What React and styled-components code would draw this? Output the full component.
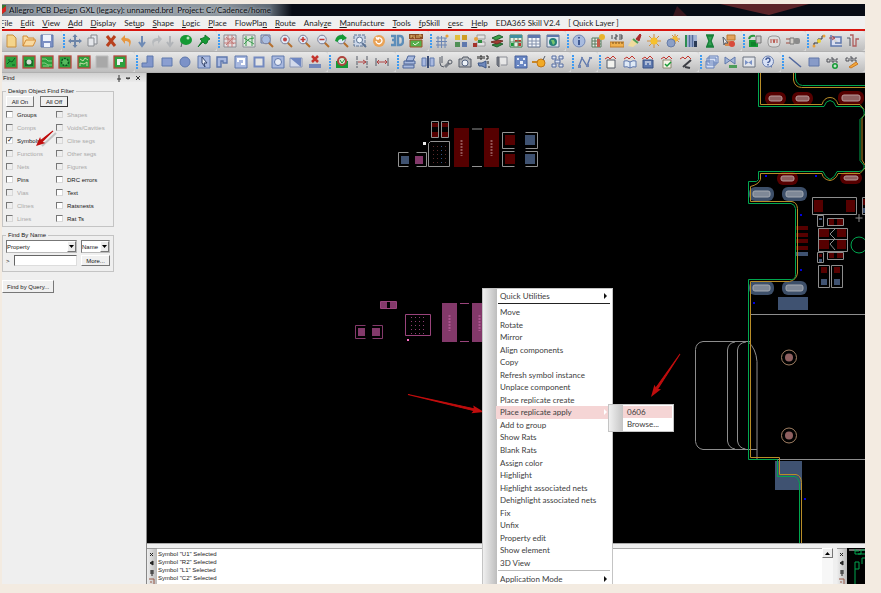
import React from "react";
import styled, { createGlobalStyle } from "styled-components";

const menus = [
  "_File", "_Edit", "_View", "_Add", "_Display", "Set_up", "_Shape", "_Logic",
  "_Place", "FlowPla_n", "_Route", "Analy_ze", "_Manufacture", "_Tools",
  "_fpSkill", "_cesc", "_Help", "EDA365 Skill V2.4", "[ Quick Layer ]",
];

const filters = [
  ["Groups", "on"], ["Shapes"],
  ["Comps"], ["Voids/Cavities"],
  ["Symbols", "checked"], ["Cline segs"],
  ["Functions"], ["Other segs"],
  ["Nets"], ["Figures"],
  ["Pins", "on"], ["DRC errors", "on"],
  ["Vias"], ["Text", "on"],
  ["Clines"], ["Ratsnests", "on"],
  ["Lines"], ["Rat Ts", "on"],
];

const commands = [
  "Move", "Rotate", "Mirror", "Align components", "Copy",
  "Refresh symbol instance", "Unplace component", "Place replicate create",
  "Place replicate apply", "Add to group", "Show Rats", "Blank Rats",
  "Assign color", "Highlight", "Highlight associated nets",
  "Dehighlight associated nets", "Fix", "Unfix", "Property edit",
  "Show element", "3D View",
];

const messages = ["U1", "R2", "L1", "C2", "R1"];

const B = "#5f78ad";
const L = "#a9b9df";
const G = "#159a35";
const R = "#c4342d";
const D = "#555b66";
const O = "#e9a13b";

const Lens = ({ color = "#dfe9f7", children }) => (
  <>
    <path d="M8 8l5 5" stroke="#b5702e" strokeWidth="2" />
    <circle cx="6" cy="5.500" r="4.300" fill={color} stroke="#7b7f99" />
    {children}
  </>
);

const Board = ({ children }) => (
  <>
    <rect x="1" y="1" width="12" height="12" fill="#2ba13c" stroke="#b8483f" strokeWidth="1.300" />
    {children}
  </>
);

const Wave = ({ children }) => (
  <>
    {children}
    <path d="M1 4l3-2 2 2 3-3 3 3" fill="none" stroke={R} />
  </>
);

const icons = {
  new: <path d="M3 1h6l3 3v9H3z" fill="#f4d48a" stroke="#c98f3c" />,
  open: <path d="M1 12V2h4l1 2h6v2M1 12l3-6h10l-3 6z" fill="#f8d9a0" stroke="#d38b35" />,
  save: <><path d="M1 1h12v12H1z" fill="#7c90c4" stroke={B} /><path d="M3 1h8v6H3zM4 9h6v4H4z" fill="#eef2fb" /></>,
  move: <path d="M7 0l2.500 3H8v3h3V4.500L14 7l-3 2.500V8H8v3h1.500L7 14l-2.500-3H6V8H3v1.500L0 7l3-2.500V6h3V3H4.500z" fill="#6d85a8" />,
  copy: <path d="M2 4h6v8H2zM5 1h6v9H8M5 1v3" fill="#e4e6ea" stroke="#85898f" />,
  remove: <path d="M3 2l8 10M11 2L3 12" stroke="#b8401d" strokeWidth="3" />,
  undo: <path d="M1 5l4-4v3c5 0 8 3 4 9 1-4 0-6-4-6v3z" fill="#e6963f" />,
  redo: <path d="M13 5L9 1v3C4 4 1 7 5 13c-1-4 0-6 4-6v3z" fill="#b7babd" />,
  down: <path d="M7 2v9M4 8l3 4 3-4" fill="none" stroke="#6f8bb5" strokeWidth="2" />,
  downOff: <path d="M7 2v9M4 8l3 4 3-4" fill="none" stroke="#b1b4b8" strokeWidth="2" />,
  ball: <><ellipse cx="7" cy="6" rx="6" ry="5" fill={G} /><circle cx="9" cy="4" r="1.500" fill="#b6e8bd" /><path d="M3 9l-1 4" stroke={D} /></>,
  pin: <path d="M8 1l5 4-2 1-1 3-2 1-2-2-5 5 4-6-2-2 3-1 2-1z" fill={G} stroke="#187a30" />,
  rats: <><path d="M1 1h12v12H1z" fill="#e5dfe1" stroke="#8a8d95" /><path d="M1 5h12M1 9h12M5 1v12M9 1v12M3 3l8 7M11 3l-8 8" stroke="#c37b78" /></>,
  ratsOff: <><path d="M1 1h12v12H1z" fill="#dfe7df" stroke="#8a8d95" /><path d="M2 4l10 6M2 10l5-5 5-1M4 2v10M10 2v10" stroke="#3f9b50" fill="none" /></>,
  zoomArea: <><path d="M1 1h9v8H1z" fill="none" stroke={B} /><Lens color="#a9bce0" /></>,
  zoomFit: <Lens><circle cx="6" cy="5.500" r="2" fill="#c34444" /></Lens>,
  zoomIn: <Lens><path d="M3.500 5.500h5M6 3v5" stroke={R} strokeWidth="1.500" /></Lens>,
  zoomOut: <Lens><path d="M3.500 5.500h5" stroke={R} strokeWidth="1.500" /></Lens>,
  zoomPrev: <><Lens /><path d="M0 7q1-6 7-6V0l5 4-5 3V5Q3 5 3 8z" fill={G} /></>,
  zoomSel: <><path d="M1 1h11v11H1z" fill="#cbd6e8" stroke="#5d7494" strokeDasharray="3 1" /><circle cx="6.500" cy="6" r="3" fill="#eef5fc" stroke="#5d7494" /><path d="M9 9l4 4" stroke="#5d7494" strokeWidth="2" /></>,
  refresh: <><circle cx="7" cy="7" r="6" fill="#e9a357" /><path d="M4 7a3 3 0 1 0 1-2.500M4 3l1 2h2" stroke="#fff" strokeWidth="1.300" fill="none" /></>,
  cube: <path d="M1 2h4v4H2h3v5H1M8 2h2q3 0 3 4.500T10 11H8z" fill="none" stroke="#5d8db9" strokeWidth="2.400" />,
  flip: <><path d="M0 0h14v5H0z" fill="#8a4b22" /><path d="M2 1v3M2 2h2M5 1v3h1M8 1v3M10 4V1h2v2" stroke="#f4d37e" fill="none" strokeWidth=".8" /><path d="M1 6h12v7H1z" fill="#54b04b" stroke="#a4532c" /><path d="M4 9l2 2 4-3" stroke="#e3f5dc" fill="none" /></>,
  grid: <><path d="M1 4h11M1 7.500h11M1 11h11M3 2v12M6.500 2v12M10 4v10" stroke="#6d86b4" /><circle cx="12" cy="2" r="1.600" fill={O} /></>,
  colors: <><path d="M1 1h5v5H1z" fill="#e0be3c" /><path d="M8 1h5v5H8z" fill="#cf9d25" /><path d="M1 8h5v5H1z" fill="#4f8f55" /><path d="M8 8h5v5H8z" fill={B} /></>,
  visible: <><path d="M5 1h8v4H5zM5 8h8v4H5z" fill="#e3e3e3" stroke="#9a9a9a" /><circle cx="4" cy="5" r="2" fill={O} /><path d="M1 9h4v4H1z" fill="#a4322a" /><path d="M6 6h4v3H6z" fill="#2f8b3e" /></>,
  layers: <><path d="M2 11l7-2 4 1-6 3z" fill="#2e8a42" stroke="#22602f" /><path d="M1 8l7-2 5 1-6 3z" fill="#a33c32" stroke="#74302a" /><path d="M2 4l7-3 4 2-7 3z" fill="#3ca14a" stroke="#22602f" /></>,
  constraint: <><path d="M1 1h12v12H1z" fill="#e7f0e7" stroke="#3d7a51" /><path d="M1 1h12v3H1z" fill="#3f8fa0" /><path d="M2 9h3v3H2z" fill={G} /><path d="M6 6h6v2H6zM9 9h3v3H9z" fill={R} /><path d="M5 4v9M9 4v9M1 8h12" stroke="#62916a" /></>,
  table: <><path d="M1 1h12v12H1z" fill="#f7f9fc" stroke="#5f6e8c" /><path d="M1 1h12v3H1z" fill={B} /><path d="M1 7h12M1 10h12M5 4v9M9 4v9" stroke="#8290ac" /></>,
  globe: <><path d="M1 1h12v12H1z" fill="#dce5ef" stroke="#5f6e8c" /><path d="M1 1h12v2H1z" fill={B} /><circle cx="7" cy="8" r="4" fill="#267e77" /><path d="M5 6l3 0 1 3-2 2z" fill="#78c66f" /></>,
  info: <><circle cx="7" cy="7" r="6" fill="#a8bbdf" stroke="#7389b7" /><path d="M7 6v5M7 3v1.500" stroke="#3f5992" strokeWidth="2" /></>,
  report: <><path d="M1 4h9v9H1z" fill="#e7ece7" stroke="#567a5c" /><path d="M1 7h9M1 10h9M4 4v9M7 4v9" stroke="#567a5c" /><path d="M6 5h3v8H6z" fill="#c15b4a" /><circle cx="11" cy="3" r="3" fill="#e8b42c" /></>,
  ruler: <><path d="M2 1v4M5 1h2v2H5v2h2M9 1h3v4H9M9 3h3" stroke="#44464c" fill="none" /><path d="M0 8h14v5H0z" fill="#f0b14e" stroke="#c07c28" /><path d="M3 8v2M6 8v2M9 8v2M12 8v2" stroke="#7b521e" /></>,
  brush: <><path d="M8 5l4-5 1 1-2 6z" fill="#a8292a" stroke="#a8292a" /><path d="M4 5l6 4-5 4-5-1z" fill="#efdb9d" /><path d="M5 5l5 4" stroke="#4f9d55" strokeWidth="2" /></>,
  sun: <><path d="M7 0v14M0 7h14M2 2l10 10M12 2L2 12" stroke="#cf8c3f" /><circle cx="7" cy="7" r="3.600" fill="#f6c12d" /></>,
  shade: <><path d="M9 0v10M4 5h10M6 1l7 7M12 1L7 6" stroke="#cf8c3f" /><circle cx="9" cy="5" r="2.800" fill="#f1ba39" /><circle cx="5" cy="9" r="4" fill="#8b9fc6" stroke="#667ca8" /></>,
  bars: <><path d="M1 1h12v12H1z" fill="#a4b4d4" /><path d="M2 1v12" stroke="#2d8c50" strokeWidth="2" /><path d="M5.500 1v12M8.500 1v12" stroke="#546b9a" strokeWidth="1.500" /><path d="M10 7h3v6h-3z" fill="#2c3b56" /></>,
  hourglass: <path d="M3 1h8M3 13h8M4 2h6L8 7l2 5H4l2-5z" fill="#32a052" stroke="#18803a" strokeWidth="1.400" />,
  dehilight: <><path d="M5 1h8v5H5z" fill="#e2a35d" stroke="#b87830" /><path d="M3 7h9v5H3z" fill="#d68b4e" /><circle cx="10" cy="10" r="3" fill="#d84a3c" /><path d="M1 3l5 6-3 0-1 2z" fill="#eee" stroke={D} /></>,
  outDb: <><path d="M1 6h9v7H1z" fill={G} /><path d="M8 2h5v7H8z" fill="#c7c7c7" stroke="#767676" /><path d="M1 5q1-4 6-3" stroke="#2c9940" strokeWidth="2" fill="none" /><path d="M3 9h5M3 11h5" stroke="#0a6d24" /></>,
  ctrl: <><rect x="1" y="2" width="12" height="11" rx="4" fill="#dcdcdc" stroke="#989898" /><path d="M4 5v4M6 5l1 4 1-4M10 5v4" stroke="#b74c43" fill="none" /></>,
  plug: <><path d="M0 5h5M0 9h5" stroke="#a34a3e" /><path d="M4 4h4v6H4z" fill="#d2cfca" stroke="#777" /><rect x="8" y="4" width="6" height="6" rx="2" fill="#8b8b8b" /></>,
  route: <><path d="M2 12V9h4V5h4V2h3" stroke="#35373e" fill="none" /><circle cx="2" cy="12" r="1.500" fill={O} /><circle cx="7" cy="7" r="2" fill="#e7d02f" /><circle cx="12" cy="2" r="1.500" fill={O} /></>,
  slide: <><path d="M2 1v11h11M4 3h8v6H6" stroke={B} fill="#d9def1" strokeWidth="1.500" /><path d="M0 4h5M3 2l3 2-3 2" stroke="#a9484e" fill="none" /></>,
  tune: <><path d="M1 4h3v8" stroke={D} fill="none" /><path d="M4 1h3v11h3V5h3" stroke="#b05c5c" fill="none" strokeWidth="1.300" /></>,
  place1: <Board><path d="M3 9l3-3 2 1 3-4M4 5h2M8 10h3" stroke="#0a5e20" fill="none" /></Board>,
  place2: <Board><path d="M3 5h8v6H3z" fill="#176b2a" /><circle cx="7" cy="7" r="2.500" fill="#d4ddd0" /></Board>,
  place3: <Board><path d="M2 4h4l2 2h4M2 8h3l3 2h4M3 11h6" stroke="#8cce85" fill="none" /></Board>,
  place4: <Board><circle cx="7" cy="7" r="3.500" fill="#55b95c" stroke="#0b5220" strokeWidth="1.500" strokeDasharray="2 1" /></Board>,
  place5: <Board><path d="M3 4l3 2 2-3 3 2M3 11V8l4 1 3-2v4" stroke="#c6dba4" fill="none" /></Board>,
  blank: <path d="M1 1h12v12H1z" fill="#a8a8a8" stroke="#bcbcbc" />,
  place6: <Board><path d="M4 4h6v3H7v3H4z" fill="#eef0ee" /></Board>,
  poly: <path d="M6 1h6v11H1V8h5z" fill="#8196cb" stroke={B} />,
  rect: <path d="M2 3h10v8H2z" fill="#8b9fd1" stroke={B} />,
  circle: <circle cx="7" cy="7" r="5" fill="#7c92c8" stroke={B} />,
  select: <><path d="M1 1h12v12H1z" fill={L} stroke={B} /><path d="M5 2l5 6H7l1 4-3-4z" fill="#eef1fa" stroke="#33446d" /></>,
  void: <path d="M2 2h10v6H8V6H6v6H2z" fill={L} stroke={B} strokeWidth="1.400" />,
  voidPoly: <><path d="M1 1h12v12H1z" fill={L} stroke={B} /><path d="M4 7V4h6v5H7" stroke="#fff" fill="none" strokeWidth="2" /></>,
  voidRect: <path d="M2.500 2.500h9v9h-9z" fill="#e4e4e4" stroke="#7389c0" strokeWidth="2" />,
  voidCircle: <><path d="M1 1h12v12H1z" fill={L} stroke={B} /><circle cx="7" cy="7" r="3.500" fill="#e8ecf5" stroke={B} /></>,
  edge: <><path d="M1 3h12v9H1z" fill="#d3daeb" stroke="#8a96b5" /><path d="M1 3h11v9z" fill="#6f87c2" /></>,
  delIsland: <><path d="M1 9h12v4H1z" fill="#7388bb" /><path d="M4 1l6 6M10 1L4 7" stroke={R} strokeWidth="2.500" /></>,
  netShow: <><path d="M1 6h12v7H1z" fill={G} /><circle cx="7" cy="6" r="4" fill="#d5ead3" stroke="#b0443e" strokeWidth="2" /><path d="M5 5l2 3 3-4" fill="none" stroke={G} /></>,
  dim1: <><path d="M2 1v12M12 1v12" stroke={D} strokeDasharray="4 1" /><path d="M3 7h8M8 5l3 2-3 2" stroke="#b04646" fill="none" /></>,
  dim2: <><path d="M1 3v8M13 3v8" stroke={D} /><path d="M2 7h10M4 5L2 7l2 2M10 5l2 2-2 2" stroke="#b04242" fill="none" /></>,
  stack: <><path d="M6 1h7l-2 5H4zM2 6h11v3H2zM1 10h11v3H1z" fill="#a9bade" stroke="#4f679a" /></>,
  mirror: <><path d="M1 3h4v8H1zM9 3h4v8H9z" fill={L} stroke={B} /><path d="M7 1v12" stroke="#3c4e76" strokeWidth="2" /></>,
  wrench: <><path d="M1 2v6q0 4 4 4M3 1v7" fill="none" stroke={D} /><path d="M6 12l4-4" stroke="#7b7f87" strokeWidth="3" /><circle cx="11" cy="7" r="2" fill="none" stroke={D} /></>,
  camera: <><path d="M1 4h3l1-2h5l1 2h2v8H1z" fill="#b3b6bb" stroke={D} /><circle cx="7" cy="8" r="3" fill="#edf2f8" stroke="#586783" /></>,
  binary: <><path d="M1 1v3M3 1h2v3H3zM7 1v3M9 1h2v3H9M11 6v3M12 11v2" stroke="#222" fill="none" /><path d="M1 8h4l4-2v7l-4-2H2z" fill="#6f89bd" stroke="#3d5686" /></>,
  book: <><path d="M4 2h8v8H6" fill="#e7e7e7" stroke="#8a8d95" /><path d="M2 2v8l2 2V2z" fill="#777c86" stroke="#626772" /></>,
  pattern: <><path d="M1 1h12v12H1z" fill="#6a87c3" stroke="#47639e" /><path d="M3 3h2v2H3zM9 3h2v2H9zM6 6h3v3H6zM3 10h2v1H3zM10 9h2v2h-2z" fill="#e3ebf8" /></>,
  bomb: <><path d="M0 7h6" stroke="#c98726" strokeWidth="2" /><circle cx="9" cy="8" r="4" fill="#f2aa25" stroke="#bf761a" /><path d="M11 5l2-4" stroke={D} /></>,
  matrix: <path d="M1 1h4v3H1zM8 1h4v3H8zM1 9h4v3H1zM8 9h4v3H8zM4 5h5v3H4z" fill="#dfe6f3" stroke="#526b9f" />,
  spline: <><path d="M1 11L4 3l5 8 3-8" stroke={B} fill="none" strokeWidth="1.400" /><path d="M0 10h3v3H0zM3 2h2v2H3zM8 9h3v3H8zM11 2h3v2h-3z" fill="#7186b3" /></>,
  sig1: <Wave><path d="M3 5h8v8H3z" fill="#f2f2ee" stroke={D} /></Wave>,
  sig2: <Wave><path d="M1 6q3-1 6 1 3-2 6-1v6q-3-1-6 1-3-2-6-1zM7 7v6" fill="#dfe9f5" stroke={B} /></Wave>,
  sig3: <Wave><path d="M2 5h10v8H2z" fill="#5d78ae" stroke="#3a5285" /><path d="M4 7h6M4 9h2M8 9h2" stroke="#fff" /></Wave>,
  sig4: <Wave><path d="M3 5h8v8H3z" fill="#f6f4e8" stroke="#8c8a72" /><path d="M5 9l2 2 4-4" stroke={G} fill="none" strokeWidth="1.500" /></Wave>,
  sig5: <Wave><path d="M4 12l8-7M6 12l5 1" stroke="#3c3e44" strokeWidth="2" /></Wave>,
  sheets: <path d="M4 1h9v7H4zM2 3h9v7H2zM1 6h8v7H1z" fill="#d6e0f5" stroke="#6480b8" />,
  bow1: <><path d="M1 2l10 7V2L1 9z" fill="#a5b7d8" stroke={B} /><path d="M5 10h8v3H5z" fill="#4c9d59" /></>,
  bow2: <><path d="M1 2h12v10H1z" fill="#e2e5eb" stroke="#6b7280" /><path d="M3 5l7 5V5l-7 5z" fill="#7a92c6" /></>,
  help: <><circle cx="7" cy="6.500" r="5.500" fill="#d8e1f5" stroke="#6b80b0" /><path d="M9 11l2 2v-3" fill="#6b80b0" /><path d="M5 5q0-2 2-2t2 2-2 2.500V8M7 9v1.500" stroke="#3e5794" fill="none" strokeWidth="1.400" /></>,
  line: <path d="M1 2l12 10" stroke="#52689e" strokeWidth="1.600" />,
  addRect: <path d="M2 3h10v8H2z" fill="#889bc8" stroke="#6176a8" />,
  addText: <><path d="M3 4H1v3h3V4M6 2v5h2V4H6M12 4h-2v3h2" stroke="#4f5158" fill="none" /><circle cx="9" cy="11" r="3" fill={G} /><path d="M7.500 11h3M9 9.500v3" stroke="#fff" /></>,
  editText: <><path d="M3 3H1v3h3V3M6 1v5h2V3H6M12 3h-2v3h2" stroke="#4f5158" fill="none" /><path d="M4 12l7-5 2 2-7 4z" fill="#f3a83b" stroke="#cb7923" /></>,
};

const topBar = [
  { w: 60, plain: true, items: ["new", "open", "save"] },
  { w: 155, items: ["move", "copy", "remove", "undo", "down", "redo", "downOff", "ball", "pin"] },
  { w: 212, items: ["rats", "ratsOff", "zoomArea", "zoomFit", "zoomIn", "zoomOut", "zoomPrev", "zoomSel", "refresh", "cube", "flip"] },
  { w: 137, items: ["grid", "colors", "visible", "layers", "constraint", "table", "globe"] },
  { w: 176, items: ["info", "report", "ruler", "brush", "sun", "shade", "bars", "hourglass", "dehilight"] },
  { w: 64, items: ["outDb", "ctrl", "plug"] },
  { w: 59, items: ["route", "slide", "tune"] },
];

const lowerBar = [
  { w: 133, plain: true, items: ["place1", "place2", "place3", "place4", "place5", "blank", "place6"] },
  { w: 193, items: ["poly", "rect", "circle", "select", "void", "voidPoly", "voidRect", "voidCircle", "edge", "delIsland"] },
  { w: 68, items: ["netShow", "dim1", "dim2"] },
  { w: 175, items: ["stack", "mirror", "wrench", "camera", "binary", "book", "pattern", "bomb", "matrix"] },
  { w: 27, items: ["spline"] },
  { w: 101, items: ["sig1", "sig2", "sig3", "sig4", "sig5"] },
  { w: 82, items: ["sheets", "bow1", "bow2", "help"] },
  { w: 84, items: ["line", "addRect", "addText", "editText"] },
];

const narrow = ["undo", "down", "redo", "downOff"];

const MenuLabel = ({ text }) => {
  const at = text.indexOf("_");
  if (at < 0) return text;
  return (
    <>
      {text.slice(0, at)}
      <u>{text[at + 1]}</u>
      {text.slice(at + 2)}
    </>
  );
};

const ToolRow = ({ groups }) => (
  <Toolbar $columns={groups.map((g) => `${g.w}fr`).join(" ")}>
    {groups.map((group) => (
      <ToolGroup key={group.items[0]} $plain={group.plain}>
        {!group.plain && <Grip />}
        {group.items.map((name) => (
          <ToolButton key={name} aria-label={name} $weight={narrow.includes(name) ? 14 : 18}>
            <svg width="14" height="14" viewBox="0 0 14 14">{icons[name]}</svg>
          </ToolButton>
        ))}
      </ToolGroup>
    ))}
  </Toolbar>
);

const Arrow = ({ x1, y1, x2, y2, size = 12 }) => {
  const angle = (Math.atan2(y2 - y1, x2 - x1) * 180) / Math.PI;
  const length = Math.hypot(x2 - x1, y2 - y1);
  return (
    <g transform={`translate(${x2} ${y2}) rotate(${angle})`} fill="#c00d0d">
      <path d={`M${-length} 0L${-size + 2} -1V1z`} stroke="#c00d0d" />
      <path d={`M0 0L${-size} -4L${-size + 2} 0L${-size} 4z`} />
    </g>
  );
};

const Pad = ({ x, y, w, h, blue }) => (
  <g>
    <rect x={x} y={y} width={w} height={h} rx="6" fill={blue ? "#3d4f69" : "#560000"} />
    <rect x={x + 4} y={y + 4} width={w - 8} height={h - 8} rx="2" fill={blue ? "#7e8897" : "#8f6060"} stroke={blue ? "#a5aab2" : "#b99a9a"} />
  </g>
);

const Brackets = ({ x, y, w, h, gap, color }) => (
  <path
    d={`M${x + gap} ${y}H${x}V${y + h}H${x + gap}M${x + w - gap} ${y}H${x + w}V${y + h}H${x + w - gap}`}
    fill="none"
    stroke={color}
  />
);

const dots = [0, 1, 2, 3, 4].flatMap((r) => [0, 1, 2, 3].map((c) => [c * 4, r * 4]));

const BoardDrawing = () => (
  <BoardSvg viewBox="147 73 718 470" preserveAspectRatio="xMinYMin slice">
    {/* placed module */}
    <g fill="#560000">
      <path d="M432 123h6v4h-6zM432 132h6v5h-6zM442 123h6v4h-6zM442 132h6v5h-6zM454 128h15v39h-15zM484 128h15v39h-15zM505 135h10v10h-10zM505 154h10v10h-10z" />
    </g>
    <path d="M401 156h8v8h-8zM525 135h10v10h-10zM525 154h10v10h-10z" fill="#3f5271" />
    <path d="M415 156h8v8h-8z" fill="#83396a" />
    <path d="M431.500 121.500h7v16h-7zM441.500 121.500h7v16h-7zM430.500 141.500h19v25h-21v-23zM472 129h10M472 166.500h10" fill="none" stroke="#929292" />
    <Brackets x={398.500} y={152.500} w={28} h={14} gap={10} color="#929292" />
    <Brackets x={502.500} y={132.500} w={35} h={16} gap={12} color="#929292" />
    <Brackets x={502.500} y={151.500} w={35} h={15} gap={12} color="#929292" />
    <path d="M423 142h3v3h-3z" fill="#eee" />
    {dots.map(([x, y]) => (
      <rect key={`a${x}-${y}`} x={433 + x} y={146 + y} width="1" height="1" fill={x === 8 ? "#36558a" : "#5c2b2b"} />
    ))}
    <path d="M461.500 140v16M491.500 140v16" stroke="#ad7b7b" strokeDasharray="2 1" strokeWidth="2" opacity=".7" />
    {/* module waiting for the replicate */}
    <path d="M381 301.500h6v7h-6zM390 301.500h6v7h-6zM358 328h7v8h-7zM372 328h8v8h-8zM442 303h15v39h-15zM472 303h15v39h-15z" fill="#83396a" />
    <path d="M380.500 301.500h16v7h-16zM405.500 314.500h25v21h-25zM460 303.500h9M460 341.500h9" fill="none" stroke="#9a447c" />
    <Brackets x={355.500} y={325.500} w={27} h={13} gap={10} color="#83396a" />
    <path d="M407 339h2v2h-2z" fill="#ff70c8" />
    {dots.map(([x, y]) => (
      <rect key={`b${x}-${y}`} x={411 + x} y={317 + y} width="1" height="1" fill="#8d3e72" />
    ))}
    <path d="M449.500 315v16M479.500 315v16" stroke="#c263a2" strokeDasharray="2 1" strokeWidth="2" opacity=".7" />
    {/* pads */}
    <Pad x={765} y={92} w={21} h={13} />
    <Pad x={792} y={92} w={21} h={13} />
    <Pad x={838} y={91} w={26} h={14} />
    <Pad x={777} y={172} w={21} h={13} />
    <Pad x={840} y={172} w={22} h={12} />
    <Pad x={749} y={187} w={25} h={14} blue />
    <Pad x={782} y={187} w={25} h={14} blue />
    <Pad x={749} y={281} w={25} h={14} blue />
    <Pad x={782} y={281} w={25} h={14} blue />
    <path d="M778 297h30v13h-30zM796 252h12v4h-12zM775 461h27v29h-27zM821 279h6v6h-6zM834 279h6v6h-6zM819 218h3v2h-3zM819 259h3v3h-3zM863 208h2v5h-2z" fill="#3f5271" />
    <path d="M796 226h12v4h-12zM796 233h12v4h-12zM796 239h12v4h-12zM796 246h12v4h-12zM814 200h9v12h-9zM846 200h9v12h-9zM863 199h2v6h-2zM829 219h5v6h-5zM837 219h6v6h-6zM819 229h10v8h-10zM837 229h9v8h-9zM819 240h10v9h-10zM837 240h9v9h-9zM829 253h5v5h-5zM837 253h6v5h-6zM821 267h6v6h-6zM834 267h6v6h-6zM819 254h3v3h-3z" fill="#560000" />
    {/* part outlines */}
    <path d="M812.500 197.500h44v17h-44zM865 197.500h-2.500v17H865M817.500 215.500h6v11h-6zM827.500 218.500h16v7h-16zM818.500 228.500h29v23h-29zM818.500 239.500h29M817.500 252.500h6v10h-6zM827.500 252.500h16v7h-16zM818.500 265.500h11v22h-11zM831.500 265.500h11v22h-11zM835 229l-5 5 5 5-5 5 5 6M859 214v8M855.500 218h7M751 314.500h114M757 459.500h108" fill="none" stroke="#8d8d8d" />
    <path d="M750 341.500h-47q-7 1-7.500 8v92q1 7 7.500 8h54M735 342q-7 1-7.500 8v91q1 7 7.500 8M746 342q-8 1-8.500 8v91q1 7 8 8M748 341.500q8 7 9 20v98" fill="none" stroke="#8d8d8d" />
    {/* board edge and keepin */}
    <g fill="none" stroke="#b98d28">
      <path d="M760.500 73v31.500H822q2-7 8-7t8 7h22l4 5M793.500 73v7q1 7 8 7.500H865M865 114l-3 4v42l3 5M865 168l-5 5.500h-22q-2 6-8 7-7-1-8-7h-61.500v6q-2 5-10 7V201.500H792q5 1 5.500 7V273q-1 7-8 8.500h-39v176h29v17H796q5 1 5.500 8V543" />
    </g>
    <g fill="none" stroke="#00a64f">
      <path d="M758.500 73v33.500H824q2-6 6-6t6 6h24q5 2 4 9l-4 4v41l4 5q1 5-5 6h-22q-2 6-7 8-5-2-7-8h-64.500v8l-2 2h-8v22H791q4 1 4.500 5v66q0 5-4 5h-43v180h29v17h17q4 1 5 7V543M795.500 73v5q1 7 7 7.500H865" />
      <circle cx="859" cy="245" r="8" />
    </g>
    <g fill="none" stroke="#a28064">
      <circle cx="789" cy="357.500" r="7.500" />
      <circle cx="789" cy="435.500" r="7.500" />
    </g>
    <circle cx="789" cy="357.500" r="4" fill="#8f6060" />
    <circle cx="789" cy="435.500" r="4" fill="#8f6060" />
    <path d="M765 175h2v2h-2zM815 175h2v2h-2zM800 214h2v2h-2zM800 269h2v2h-2zM753 302h2v2h-2zM804 498h2v2h-2z" fill="#0000dc" />
    <Arrow x1={408} y1={394.500} x2={484} y2={412} />
    <Arrow x1={680} y1={354} x2={651} y2={397} />
  </BoardSvg>
);

const StripIcons = () => (
  <Strip>
    <svg width="9" height="36" viewBox="0 0 9 36">
      <path d="M3 4l3 3M6 4L3 7M6 12l-3 2 3 2zM3 22h4M3 24h4M5 21v6" stroke="#222" fill="#222" />
      <path d="M2 30h5v6M3 33h2" stroke="#9b5a49" fill="none" />
    </svg>
  </Strip>
);

const Picker = ({ label, value }) => (
  <PickerBox>
    <PickerSelect aria-label={label} defaultValue={value}>
      <option>{value}</option>
    </PickerSelect>
    <PickerArrow>
      <svg width="5" height="3" viewBox="0 0 5 3"><path d="M0 0h5L2.500 3z" /></svg>
    </PickerArrow>
  </PickerBox>
);

const FindPanel = () => (
  <Panel>
    <PanelHeader>
      <span>Find</span>
      <svg width="26" height="8" viewBox="0 0 26 8">
        <path d="M3 1v4M1 5h4M3 5v3M10 4h4l-2 1zM20 2l4 4M24 2l-4 4" stroke="#333" fill="none" />
      </svg>
    </PanelHeader>
    <Group>
      <legend>Design Object Find Filter</legend>
      <ButtonLine>
        <PushButton>All On</PushButton>
        <PushButton $strong>All Off</PushButton>
      </ButtonLine>
      <Filters>
        {filters.map(([name, state]) => (
          <Filter key={name} $off={!state}>
            <Check type="checkbox" disabled={!state} defaultChecked={state === "checked"} />
            {name}
          </Filter>
        ))}
      </Filters>
      <PanelArrow width="28" height="26" viewBox="30 116 28 26">
        <path d="M56 123L42 136" stroke="#999" strokeWidth="2" opacity=".5" />
        <Arrow x1={53} y1={121} x2={36} y2={136} size={9} />
      </PanelArrow>
    </Group>
    <Group>
      <legend>Find By Name</legend>
      <NameGrid>
        <Picker label="Find by" value="Property" />
        <Picker label="Match" value="Name" />
        <Prompt>
          &gt;
          <TextBox />
        </Prompt>
        <PushButton>More...</PushButton>
      </NameGrid>
    </Group>
    <QueryButton>Find by Query...</QueryButton>
  </Panel>
);

const ContextMenu = () => (
  <Menu>
    <MenuItem>
      <button>Quick Utilities</button>
      <MenuMark />
    </MenuItem>
    <Rule $dark />
    <Commands>
      {commands.map((name) => {
        const active = name === "Place replicate apply";
        return (
          <MenuItem key={name} $active={active}>
            <button>{name}</button>
            {active && (
              <>
                <MenuMark $light />
                <SubMenu>
                  <MenuItem $active><button>0606</button></MenuItem>
                  <MenuItem><button>Browse...</button></MenuItem>
                </SubMenu>
              </>
            )}
          </MenuItem>
        );
      })}
    </Commands>
    <Rule />
    <MenuItem>
      <button>Application Mode</button>
      <MenuMark />
    </MenuItem>
  </Menu>
);

const App = () => (
  <Page>
    <GlobalStyle />
    <AppWindow>
      <TitleBar>
        <svg width="5" height="11" viewBox="0 0 5 11">
          <path d="M0 1h4v6l-4 3z" fill="#34782f" />
          <path d="M0 5l4-3v5l-4 3z" fill="#d8231e" />
        </svg>
        <Caption>Allegro PCB Design GXL (legacy): unnamed.brd&nbsp; Project: C:/Cadence/home</Caption>
        <svg width="200" height="12" viewBox="0 0 200 12">
          <path d="M55 0h89l-40 11z" fill="#5c2429" />
          <path d="M12 2l10 10H8z" fill="#38161d" />
        </svg>
      </TitleBar>
      <MenuBar>
        {menus.map((text) => (
          <button key={text}><MenuLabel text={text} /></button>
        ))}
      </MenuBar>
      <ToolRow groups={topBar} />
      <ToolRow groups={lowerBar} />
      <Workspace>
        <FindPanel />
        <Main>
          <BoardArea>
            <BoardDrawing />
          </BoardArea>
          <Console>
            <StripIcons />
            <Log>
              {messages.map((ref) => (
                <li key={ref}>Symbol "{ref}" Selected</li>
              ))}
            </Log>
            <Scroll>
              <button aria-label="Scroll up">
                <svg width="5" height="3" viewBox="0 0 5 3"><path d="M0 3h5L2.500 0z" /></svg>
              </button>
            </Scroll>
            <StripIcons />
            <Overview>
              <svg width="16" height="36" viewBox="0 0 16 36">
                <path d="M0 2h16" stroke="#ddd" />
                <path d="M6 36V14h4v7h-4M6 1v5h6v-4h4M9 6h7M16 10h-3v6M6 3h4" stroke="#00a64f" fill="none" />
              </svg>
            </Overview>
          </Console>
          <ContextMenu />
        </Main>
      </Workspace>
    </AppWindow>
  </Page>
);

const GlobalStyle = createGlobalStyle`
  * {
    box-sizing: border-box;
  }

  body {
    margin: 0;
    background: #f3ebe1;
  }

  button, input, select {
    font: inherit;
    color: inherit;
    margin: 0;
    padding: 0;
  }

  ul {
    list-style: none;
    margin: 0;
    padding: 0;
  }

  svg {
    display: block;
    flex: none;
  }
`;

const Page = styled.div`
  height: 100vh;
  padding: 4px 16px 9px 2px;
`;

const AppWindow = styled.div`
  height: 100%;
  display: flex;
  flex-direction: column;
  overflow: hidden;
  background: #efefef;
  font: 8px/12px Lato, "Open Sans", sans-serif;
`;

const TitleBar = styled.header`
  display: flex;
  flex: none;
  height: 12px;
  background: linear-gradient(90deg, #77818b, #9aa2aa 80px, #8d969e 220px, #5f6a75 268px, #070b14 290px);
`;

const Caption = styled.h1`
  flex: 1;
  margin: 0 0 0 2px;
  font-size: 8px;
  line-height: 12px;
  font-weight: 400;
  color: #080a0d;
  white-space: nowrap;
  text-shadow: 0 0 3px #dfe4e8;
`;

const MenuBar = styled.nav`
  display: flex;
  flex: none;
  gap: 8px;
  height: 15px;
  margin-left: -2px;
  background: #f0f0f0;
  border-bottom: 2px solid #d8150f;
  overflow: hidden;

  button {
    border: 0;
    background: none;
    color: #222;
    white-space: nowrap;
  }
`;

const Toolbar = styled.div`
  display: grid;
  flex: none;
  grid-template-columns: ${(props) => props.$columns};
  height: 21px;
  background: #d9d9d9;
  border-bottom: 1px solid #b0b0b0;
`;

const ToolGroup = styled.div`
  display: flex;
  align-items: center;
  min-width: 0;
  padding-right: ${(props) => (props.$plain ? 6 : 4)}px;
  background: linear-gradient(#e9e9e9, #bdbdbd);
  border-radius: 0 4px 4px 0;
`;

const Grip = styled.i`
  flex: none;
  width: 2px;
  height: 14px;
  margin: 0 1px;
  background: repeating-linear-gradient(#3d9bf3 0 2px, transparent 2px 3px);
`;

const ToolButton = styled.button`
  display: flex;
  flex: ${(props) => props.$weight} 1 0;
  min-width: 0;
  justify-content: center;
  border: 0;
  background: none;
`;

const Workspace = styled.div`
  display: flex;
  flex: 1;
  min-height: 0;
`;

const Panel = styled.aside`
  flex: none;
  width: 144px;
  font: 6px/10px "Liberation Sans", Arial, sans-serif;
  color: #151515;
  background: #efefef;
`;

const PanelHeader = styled.div`
  display: flex;
  align-items: center;
  justify-content: space-between;
  height: 9px;
  margin-bottom: 4px;
  padding: 0 4px 0 1px;
  background: linear-gradient(#d0d0d0, #ececec);
`;

const Group = styled.fieldset`
  position: relative;
  width: 112px;
  margin: 0 0 3px;
  padding: 0 3px 1px;
  border: 1px solid #c4c4c4;

  legend {
    padding: 0 2px;
  }
`;

const ButtonLine = styled.div`
  display: flex;
  gap: 6px;
  margin-bottom: 1px;
`;

const PushButton = styled.button`
  height: 11px;
  min-width: 28px;
  padding: 0 4px;
  line-height: 8px;
  white-space: nowrap;
  background: #f0f0f0;
  border: 1px solid;
  border-color: ${(props) => (props.$strong ? "#777 #333 #333 #777" : "#fff #777 #777 #fff")};
`;

const Filters = styled.div`
  display: grid;
  grid-template-columns: 50px 1fr;
  grid-auto-rows: 13px;
`;

const Filter = styled.label`
  display: flex;
  align-items: center;
  gap: 4px;
  white-space: nowrap;
  color: ${(props) => (props.$off ? "#a9a9a9" : "#151515")};
`;

const Check = styled.input`
  appearance: none;
  width: 7px;
  height: 7px;
  background: ${(props) => (props.disabled ? "#eee" : "#fff")};
  border: 1px solid;
  border-color: #777 #d8d8d8 #d8d8d8 #777;

  &:checked::after {
    content: "✓";
    display: block;
    font: bold 7px/5px "DejaVu Sans", sans-serif;
  }
`;

const PanelArrow = styled.svg`
  position: absolute;
  left: 27px;
  top: 30px;
  pointer-events: none;
`;

const NameGrid = styled.div`
  display: grid;
  grid-template-columns: 1fr 29px;
  gap: 2px 4px;
  padding-bottom: 4px;
`;

const PickerBox = styled.div`
  display: flex;
  height: 13px;
  background: #fff;
  border: 1px solid;
  border-color: #777 #bbb #bbb #777;
`;

const PickerSelect = styled.select`
  appearance: none;
  flex: 1;
  min-width: 0;
  border: 0;
  background: none;
`;

const PickerArrow = styled.span`
  display: flex;
  align-items: center;
  justify-content: center;
  width: 9px;
  background: #ececec;
  border: 1px solid;
  border-color: #fff #777 #777 #fff;
`;

const Prompt = styled.label`
  display: flex;
  align-items: center;
  justify-content: space-between;
`;

const TextBox = styled.input`
  width: 63px;
  height: 11px;
  background: #fff;
  border: 1px solid;
  border-color: #666 #ddd #ddd #666;
`;

const QueryButton = styled(PushButton)`
  height: 13px;
  margin-top: 5px;
`;

const Main = styled.main`
  position: relative;
  display: flex;
  flex: 1;
  flex-direction: column;
  min-width: 0;
  border-left: 1px solid #888;
`;

const BoardArea = styled.div`
  flex: 1;
  min-height: 0;
  overflow: hidden;
  background: #000;
`;

const BoardSvg = styled.svg`
  width: 100%;
  height: 100%;
`;

const Console = styled.section`
  display: flex;
  flex: none;
  height: 41px;
  padding-top: 4px;
  border-top: 1px solid #aaa;
  font: 6px/8px "Liberation Sans", Arial, sans-serif;
`;

const Strip = styled.div`
  flex: none;
  width: 10px;
  overflow: hidden;
  background: linear-gradient(90deg, #eee, #bbb);
  border-top: 1px solid #999;
`;

const Log = styled.ul`
  flex: 1;
  overflow: hidden;
  padding: 1px;
  background: #fff;
  border-top: 1px solid #aaa;
  color: #222;
`;

const Scroll = styled.div`
  width: 11px;
  margin-right: 4px;
  background: #f7f7f7;

  button {
    display: flex;
    align-items: center;
    justify-content: center;
    width: 11px;
    height: 10px;
    background: #eee;
    border: 1px solid;
    border-color: #fff #777 #777 #fff;
  }
`;

const Overview = styled.div`
  width: 18px;
  overflow: hidden;
  padding-left: 2px;
  background: #000;
`;

const MenuItem = styled.li`
  position: relative;
  display: flex;
  align-items: center;
  min-height: 0;
  margin-left: 13px;
  background: ${(props) => (props.$active ? "#f5d5d5" : "none")};

  > button {
    padding: 0 4px;
    border: 0;
    background: none;
    color: #3d3d3d;
    line-height: 12px;
    white-space: nowrap;
  }
`;

const Menu = styled.ul`
  position: absolute;
  left: 335px;
  top: 215px;
  width: 131px;
  padding: 1px 0;
  border: 1px solid #c4c4c4;
  background: linear-gradient(90deg, #f0f0f0, #bdbdbd 14px, #fff 14px);
`;

const Commands = styled.ul`
  display: grid;
  grid-auto-rows: 1fr;
  height: 263px;
`;

const Rule = styled.li`
  height: 1px;
  margin: 1px 2px 2px 15px;
  background: ${(props) => (props.$dark ? "#222" : "#bbb")};
`;

const MenuMark = styled.i`
  margin: 0 5px 0 auto;
  border: 3px solid transparent;
  border-left-color: ${(props) => (props.$light ? "#fff" : "#111")};
  border-right: 0;
`;

const SubMenu = styled.ul`
  position: absolute;
  z-index: 1;
  left: 112px;
  top: -2px;
  width: 66px;
  padding: 1px;
  border: 1px solid #c4c4c4;
  background: linear-gradient(90deg, #f0f0f0, #c4c4c4 14px, #fff 14px);
`;

export default App;
